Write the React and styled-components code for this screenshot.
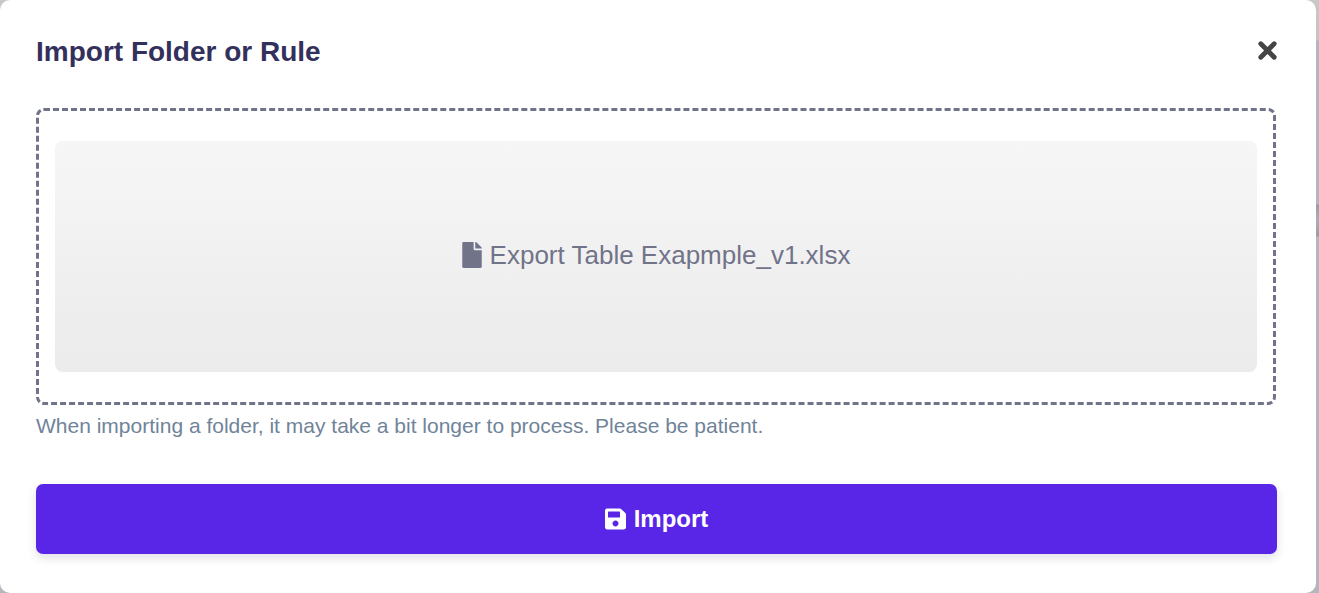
import React from "react";
import styled, { createGlobalStyle } from "styled-components";
import { FaFile, FaSave } from "react-icons/fa";

const GlobalStyle = createGlobalStyle`
  * { box-sizing: border-box; }
  body {
    margin: 0;
    background: #b5b5bd;
    font-family: "Liberation Sans", Arial, sans-serif;
  }
`;

const Backdrop = styled.div`
  min-height: 100vh;
  display: flex;
  padding-right: 3px;
  background: linear-gradient(#c8c8c8 0, #c4c4c6 40px, #b5b5bd 41px, #b5b5bd 204px, #9c9ca3 205px, #adadb5 220px, #9c9ca3 236px, #b5b5bd 237px);
`;

const Dialog = styled.section`
  flex: 1;
  display: flex;
  flex-direction: column;
  padding: 32px 39px 39px 36px;
  border-radius: 10px;
  background: #fff;
`;

const Header = styled.header`
  display: flex;
  align-items: flex-start;
  justify-content: space-between;
  margin-bottom: 36px;
`;

const Title = styled.h2`
  margin: 0;
  font-size: 28px;
  line-height: 40px;
  font-weight: 700;
  color: #33305c;
`;

const CloseButton = styled.button`
  display: flex;
  align-items: center;
  height: 36px;
  padding: 0;
  border: 0;
  background: none;
  color: #444;
  cursor: pointer;
`;

const DropZone = styled.div`
  margin-right: 1px;
  padding: 30px 16px;
  border: 3px dashed #717389;
  border-radius: 8px;
`;

const FilePanel = styled.div`
  display: flex;
  align-items: center;
  justify-content: center;
  gap: 8px;
  height: 231px;
  padding-bottom: 4px;
  border-radius: 8px;
  background: linear-gradient(#f6f6f6, #ebebeb);
  color: #717389;
  font-size: 26px;
  line-height: 32px;

  svg { width: 20px; }
`;

const Hint = styled.p`
  margin: 8px 0 45px;
  font-size: 21px;
  line-height: 26px;
  color: #708499;
`;

const ImportButton = styled.button`
  display: flex;
  align-items: center;
  justify-content: center;
  gap: 8px;
  height: 70px;
  padding: 0;
  border: 0;
  border-radius: 7px;
  background: #5925e6;
  box-shadow: 0 4px 10px rgba(50, 50, 93, 0.15);
  color: #fff;
  font-family: inherit;
  font-size: 24px;
  font-weight: 700;
  cursor: pointer;

  svg { width: 21px; }
`;

function CloseIcon() {
  return (
    <svg width="19" height="19" viewBox="0 0 19 19" aria-hidden="true">
      <path
        d="M2.8 2.8 16.2 16.2M16.2 2.8 2.8 16.2"
        fill="none"
        stroke="currentColor"
        strokeWidth="4.8"
        strokeLinecap="round"
      />
    </svg>
  );
}

export default function App() {
  return (
    <>
      <GlobalStyle />
      <Backdrop>
        <Dialog role="dialog" aria-labelledby="import-title">
          <Header>
            <Title id="import-title">Import Folder or Rule</Title>
            <CloseButton type="button" aria-label="Close">
              <CloseIcon />
            </CloseButton>
          </Header>
          <DropZone>
            <FilePanel>
              <FaFile />
              <span>Export Table Exapmple_v1.xlsx</span>
            </FilePanel>
          </DropZone>
          <Hint>
            When importing a folder, it may take a bit longer to process. Please be patient.
          </Hint>
          <ImportButton type="button">
            <FaSave />
            <span>Import</span>
          </ImportButton>
        </Dialog>
      </Backdrop>
    </>
  );
}
